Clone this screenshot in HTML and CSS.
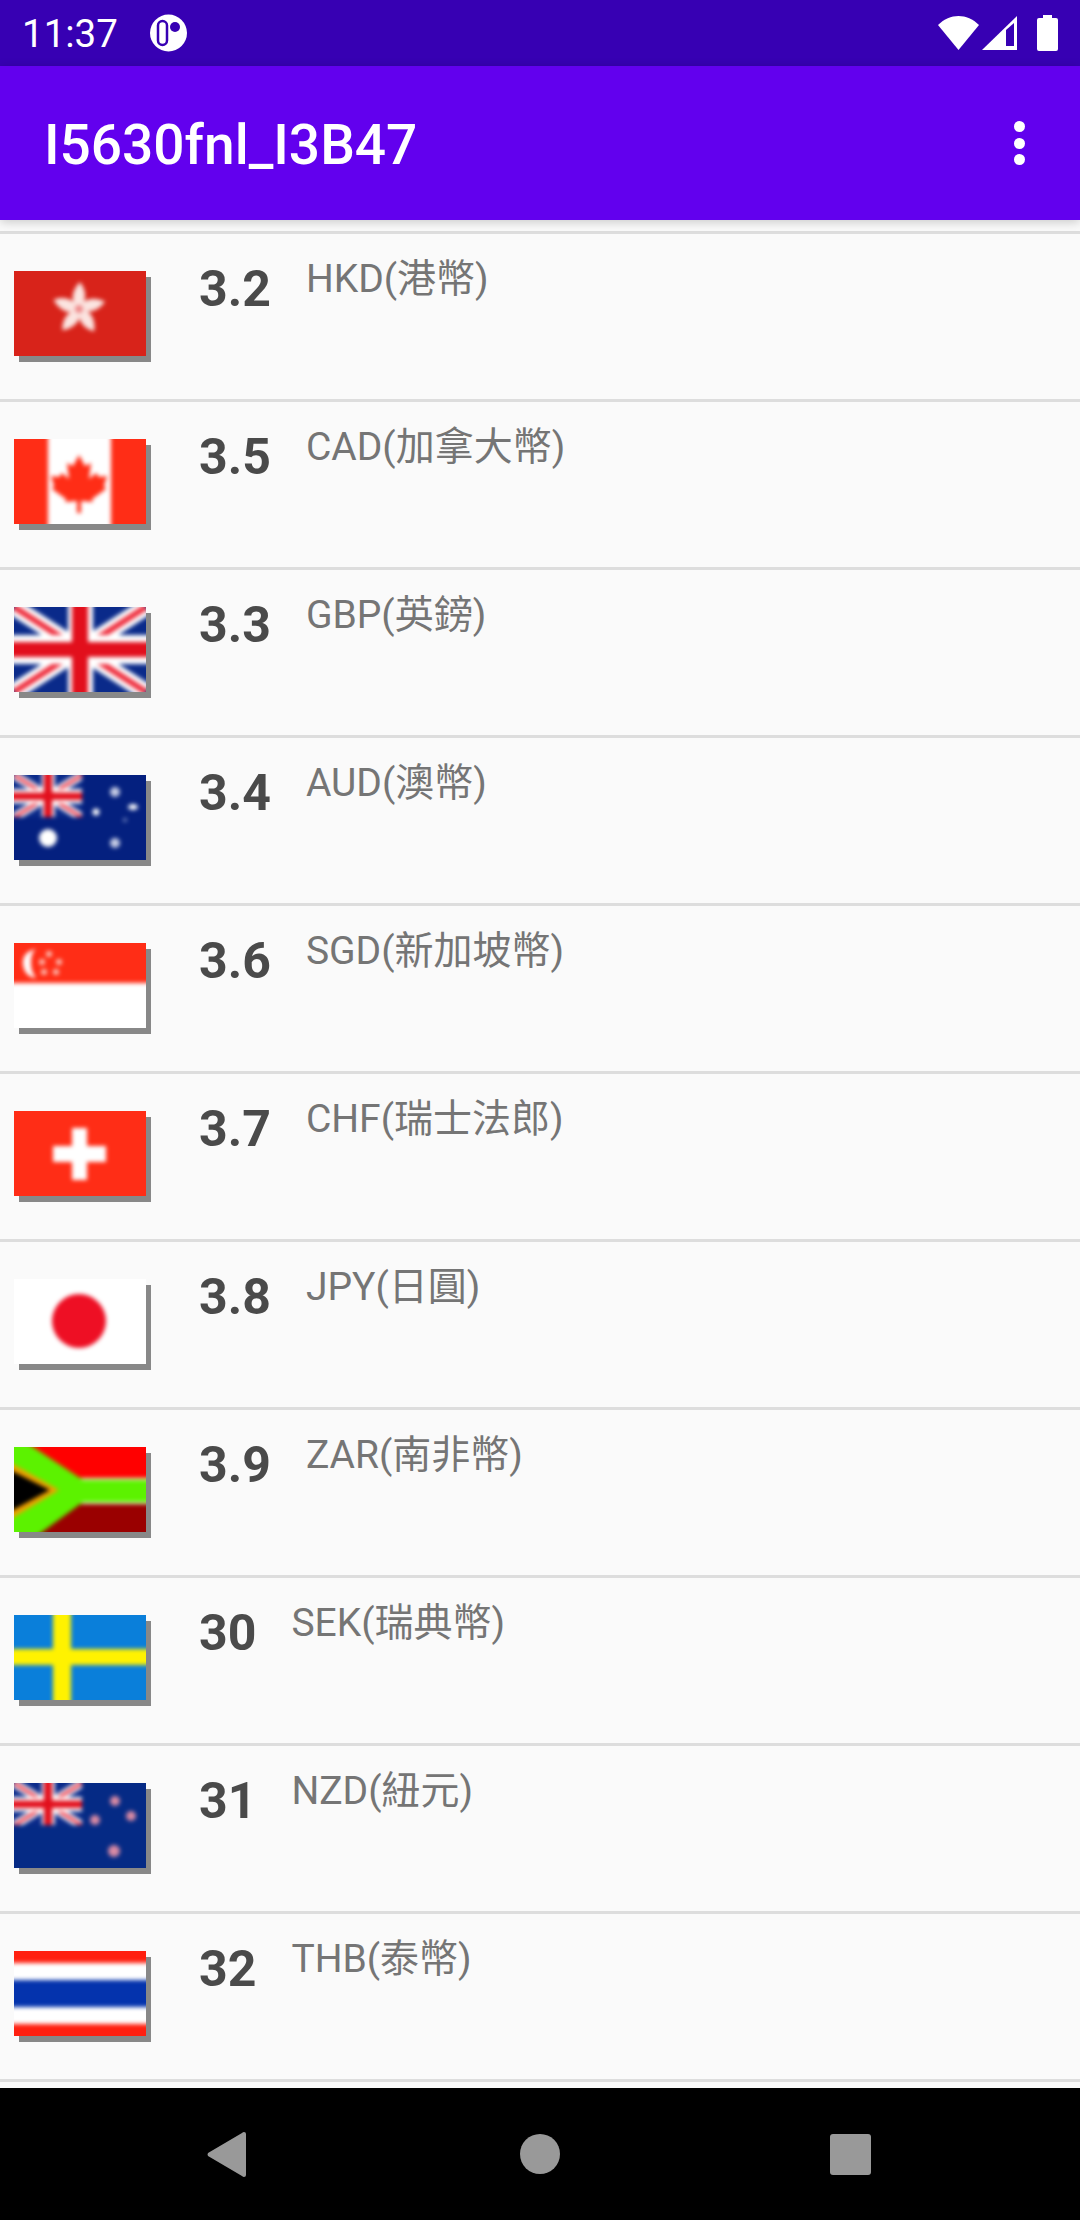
FILE: index.html
```html
<!DOCTYPE html>
<html>
<head>
    <title>I5630fnl_I3B47</title>
    <meta charset="utf-8">
    <link rel="stylesheet" href="styles.css">
</head>
<body>
<svg class="defs" width="0" height="0">
    <defs>
        <!-- Union Jack, reused for the UK, AU and NZ flags -->
        <g id="union">
            <rect x="-10" y="-10" width="152" height="105" fill="#0a2a8a"/>
            <path d="M0 0L132 85M132 0L0 85" stroke="#fff" stroke-width="17"/>
            <path d="M0 0L132 85M132 0L0 85" stroke="#ee2a3a" stroke-width="6"/>
            <rect x="-10" y="28" width="152" height="29" fill="#fff"/>
            <rect x="54" y="-10" width="25" height="105" fill="#fff"/>
            <rect x="-10" y="35" width="152" height="15" fill="#e20f1c"/>
            <rect x="58" y="-10" width="16" height="105" fill="#e20f1c"/>
        </g>
    </defs>
</svg>

<div class="statusbar">
    <div class="status-left">
        <span class="clock">11:37</span>
        <svg class="status-app" viewBox="0 0 37 38">
            <circle cx="18.5" cy="19" r="18.5" fill="#fff"/>
            <rect x="8" y="7" width="9" height="24" rx="4.5" fill="#fff" stroke="#3700b3" stroke-width="2.5"/>
            <circle cx="25" cy="13" r="5" fill="#3700b3"/>
        </svg>
    </div>
    <div class="status-right">
        <svg class="status-wifi" viewBox="0 0 41 34"><path d="M0 9C12-3 29-3 41 9L20.5 34Z" fill="#fff"/></svg>
        <svg class="status-signal" viewBox="0 0 35 34">
            <path d="M35 0V34H0Z" fill="#fff"/>
            <path d="M24 14V30H32V7Z" fill="#3700b3"/>
        </svg>
        <svg class="status-battery" viewBox="0 0 21 36"><path d="M6 0H15V3H19Q21 3 21 5V34Q21 36 19 36H2Q0 36 0 34V5Q0 3 2 3H6Z" fill="#fff"/></svg>
    </div>
</div>

<div class="appbar">
    <span class="app-title">I5630fnl_I3B47</span>
    <div class="overflow"><i></i><i></i><i></i></div>
</div>

<div class="list">
    <div class="row">
        <div class="flag"><svg viewBox="0 0 132 85">
            <rect x="-10" y="-10" width="152" height="105" fill="#d8231a"/>
            <g fill="#fbe4e0" transform="translate(65 38)">
                <path id="petal" d="M0 0C-9-6-8-18 1-27C8-18 8-8 0 0Z"/>
                <use href="#petal" transform="rotate(72)"/>
                <use href="#petal" transform="rotate(144)"/>
                <use href="#petal" transform="rotate(216)"/>
                <use href="#petal" transform="rotate(288)"/>
            </g>
            <circle cx="65" cy="38" r="4" fill="#e88"/>
        </svg></div>
        <span class="rate">3.2</span><span class="code">HKD(港幣)</span>
    </div>
    <div class="row">
        <div class="flag"><svg viewBox="0 0 132 85">
            <rect x="-10" y="-10" width="152" height="105" fill="#ff2d16"/>
            <rect x="34" y="-10" width="63" height="105" fill="#fff"/>
            <path d="M65 16L71 27L77 24L75 40L82 34L85 38L93 37L90 47L92 50L78 60L79 63L67 62V74H63V62L51 63L52 60L38 50L40 47L37 37L45 38L48 34L55 40L53 24L59 27Z" fill="#ff2d16"/>
        </svg></div>
        <span class="rate">3.5</span><span class="code">CAD(加拿大幣)</span>
    </div>
    <div class="row">
        <div class="flag"><svg viewBox="0 0 132 85"><use href="#union"/></svg></div>
        <span class="rate">3.3</span><span class="code">GBP(英鎊)</span>
    </div>
    <div class="row">
        <div class="flag"><svg viewBox="0 0 132 85">
            <rect x="-10" y="-10" width="152" height="105" fill="#04207f"/>
            <g transform="scale(.515 .5)"><use href="#union"/></g>
            <rect x="68" y="-10" width="74" height="60" fill="#04207f"/>
            <rect x="-10" y="42" width="152" height="53" fill="#04207f"/>
            <g fill="#fff">
                <circle cx="34" cy="63" r="9"/>
                <circle cx="101" cy="17" r="5" fill="#c4cbe4"/>
                <circle cx="82" cy="37" r="3.5"/>
                <ellipse cx="119" cy="32" rx="5" ry="3"/>
                <circle cx="111" cy="45" r="2" fill="#7b8cc4"/>
                <circle cx="101" cy="68" r="5" fill="#c4cbe4"/>
            </g>
        </svg></div>
        <span class="rate">3.4</span><span class="code">AUD(澳幣)</span>
    </div>
    <div class="row">
        <div class="flag"><svg viewBox="0 0 132 85">
            <rect x="-10" y="-10" width="152" height="105" fill="#fff"/>
            <rect x="-10" y="-10" width="152" height="50" fill="#ff2d16"/>
            <path d="M22 6C12 8 8 14 9 22C10 30 16 35 22 35C18 30 17 25 17 20C17 14 18 9 22 6Z" fill="#fff"/>
            <g fill="#fbc4ba">
                <circle cx="35" cy="11" r="3"/>
                <circle cx="45" cy="19" r="3"/>
                <circle cx="28" cy="19" r="3"/>
                <circle cx="30" cy="29" r="3"/>
                <circle cx="42" cy="29" r="3"/>
            </g>
        </svg></div>
        <span class="rate">3.6</span><span class="code">SGD(新加坡幣)</span>
    </div>
    <div class="row">
        <div class="flag"><svg viewBox="0 0 132 85">
            <rect x="-10" y="-10" width="152" height="105" fill="#ff2d16"/>
            <rect x="58" y="17" width="15" height="52" fill="#fff"/>
            <rect x="39" y="35" width="53" height="16" fill="#fff"/>
        </svg></div>
        <span class="rate">3.7</span><span class="code">CHF(瑞士法郎)</span>
    </div>
    <div class="row">
        <div class="flag"><svg viewBox="0 0 132 85">
            <rect x="-10" y="-10" width="152" height="105" fill="#fff"/>
            <circle cx="65" cy="42" r="27" fill="#ee0f24"/>
        </svg></div>
        <span class="rate">3.8</span><span class="code">JPY(日圓)</span>
    </div>
    <div class="row">
        <div class="flag"><svg viewBox="0 0 132 85">
            <rect x="-10" y="-10" width="152" height="55" fill="#ff0000"/>
            <rect x="-10" y="44" width="152" height="51" fill="#9a0000"/>
            <rect x="60" y="31" width="82" height="26" fill="#e8ffd0"/>
            <path d="M-10-10H4L19 0L69 33H142V55H69L28 85L15 95H-10Z" fill="#5cf200"/>
            <path d="M-10 12L45 43L-10 76Z" fill="#f0a000"/>
            <path d="M-10 20L36 43L-10 68Z" fill="#000"/>
        </svg></div>
        <span class="rate">3.9</span><span class="code">ZAR(南非幣)</span>
    </div>
    <div class="row">
        <div class="flag"><svg viewBox="0 0 132 85">
            <rect x="-10" y="-10" width="152" height="105" fill="#0a7fda"/>
            <rect x="39" y="-10" width="18" height="105" fill="#fff200"/>
            <rect x="-10" y="34" width="152" height="16" fill="#fff200"/>
        </svg></div>
        <span class="rate">30</span><span class="code">SEK(瑞典幣)</span>
    </div>
    <div class="row">
        <div class="flag"><svg viewBox="0 0 132 85">
            <rect x="-10" y="-10" width="152" height="105" fill="#052a85"/>
            <g transform="scale(.515 .5)"><use href="#union"/></g>
            <rect x="68" y="-10" width="74" height="60" fill="#052a85"/>
            <rect x="-10" y="42" width="152" height="53" fill="#052a85"/>
            <g fill="#d98aa4">
                <circle cx="101" cy="18" r="5"/>
                <circle cx="81" cy="37" r="5"/>
                <circle cx="117" cy="33" r="5"/>
                <circle cx="100" cy="68" r="6"/>
            </g>
        </svg></div>
        <span class="rate">31</span><span class="code">NZD(紐元)</span>
    </div>
    <div class="row">
        <div class="flag"><svg viewBox="0 0 132 85">
            <rect x="-10" y="-10" width="152" height="105" fill="#ff2010"/>
            <rect x="-10" y="12" width="152" height="61" fill="#fff"/>
            <rect x="-10" y="29" width="152" height="27" fill="#0433ad"/>
        </svg></div>
        <span class="rate">32</span><span class="code">THB(泰幣)</span>
    </div>
    <div class="row"></div>
</div>

<div class="navbar">
    <svg class="nav-back" viewBox="0 0 39 45"><path d="M37 0Q39 0 39 2V43Q39 45 37 45Q36 45 35 44L1 24Q0 22.5 1 21L35 1Q36 0 37 0Z" fill="#999"/></svg>
    <div class="nav-home"></div>
    <div class="nav-recent"></div>
</div>
</body>
</html>
```

FILE: styles.css
```css
body {
    margin: 0;
    width: 1080px;
    height: 2220px;
    display: flex;
    flex-direction: column;
    overflow: hidden;
    background-color: #fafafa;
    font-family: Roboto, "Noto Sans CJK TC", sans-serif;
}
.defs {
    position: absolute;
}
.statusbar {
    flex: 0 0 66px;
    display: flex;
    justify-content: space-between;
    align-items: center;
    background-color: #3700b3;
    color: #ffffff;
}
.status-left {
    display: flex;
    align-items: center;
    padding-left: 22px;
}
.clock {
    font-size: 38.5px;
    width: 128px;
}
.status-app {
    width: 37px;
    height: 38px;
}
.status-right {
    display: flex;
    align-items: center;
    padding-right: 22px;
}
.status-wifi {
    width: 41px;
    height: 34px;
}
.status-signal {
    width: 35px;
    height: 34px;
    margin-left: 3px;
}
.status-battery {
    width: 21px;
    height: 36px;
    margin-left: 20px;
}
.appbar {
    flex: 0 0 154px;
    display: flex;
    justify-content: space-between;
    align-items: center;
    padding: 0 55px 0 44px;
    background-color: #6200ee;
    color: #ffffff;
    position: relative;
    box-shadow: 0 2px 10px rgba(0, 0, 0, 0.2);
}
.app-title {
    font-size: 55px;
    font-weight: 500;
    margin-top: 3px;
}
.overflow {
    display: flex;
    flex-direction: column;
    gap: 5.5px;
}
.overflow i {
    display: block;
    width: 11px;
    height: 11px;
    border-radius: 50%;
    background-color: #ffffff;
}
.list {
    flex: 1;
    overflow: hidden;
    padding-top: 11px;
}
.row {
    height: 165px;
    display: flex;
    align-items: flex-start;
    border-top: 3px solid #dddddd;
}
.flag {
    width: 132px;
    height: 85px;
    margin: 37px 53px 0 14px;
    overflow: hidden;
    box-shadow: 5px 6px 0 #888888;
    flex-shrink: 0;
}
.flag svg {
    display: block;
    width: 132px;
    height: 85px;
    overflow: visible;
    filter: blur(2.2px);
}
.rate {
    margin-top: 26px;
    font-size: 50px;
    font-weight: 700;
    color: #4a4a4a;
}
.code {
    margin: 13px 0 0 35px;
    font-size: 39px;
    color: #757575;
}
.navbar {
    flex: 0 0 132px;
    display: flex;
    align-items: center;
    background-color: #000000;
    position: relative;
}
.nav-back {
    width: 39px;
    height: 45px;
    margin-left: 207px;
}
.nav-home {
    width: 40px;
    height: 40px;
    margin-left: 274px;
    border-radius: 50%;
    background-color: #999999;
}
.nav-recent {
    width: 41px;
    height: 41px;
    margin-left: 270px;
    border-radius: 3px;
    background-color: #999999;
}
```
